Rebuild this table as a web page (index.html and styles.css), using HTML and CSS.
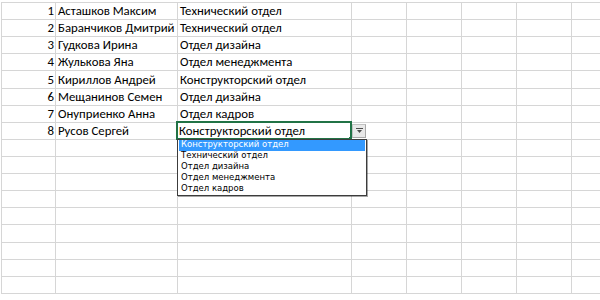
FILE: index.html
```html
<!DOCTYPE html>
<html lang="ru">
<head>
  <meta charset="UTF-8" />
  <title>Отделы</title>
  <link rel="stylesheet" href="styles.css">
</head>
<body>
  <div id="sheet" class="sheet"></div>

  <script>
    const staff = [
      ['Асташков Максим', 'Технический отдел'],
      ['Баранчиков Дмитрий', 'Технический отдел'],
      ['Гудкова Ирина', 'Отдел дизайна'],
      ['Жулькова Яна', 'Отдел менеджмента'],
      ['Кириллов Андрей', 'Конструкторский отдел'],
      ['Мещанинов Семен', 'Отдел дизайна'],
      ['Онуприенко Анна', 'Отдел кадров'],
      ['Русов Сергей', 'Конструкторский отдел']
    ];
    const departments = ['Конструкторский отдел', 'Технический отдел', 'Отдел дизайна', 'Отдел менеджмента', 'Отдел кадров'];
    const totalRows = 17;
    const emptyCols = 5;

    function cell(text, cls) {
      const el = document.createElement('div');
      el.className = 'cell' + (cls ? ' ' + cls : '');
      el.textContent = text || '';
      return el;
    }

    function dropdown() {
      const list = document.createElement('div');
      list.className = 'dropdown';
      departments.forEach((d, i) => {
        const item = document.createElement('div');
        item.className = 'option' + (i === 0 ? ' active' : '');
        item.textContent = d;
        list.appendChild(item);
      });
      return list;
    }

    function buildSheet() {
      const sheet = document.getElementById('sheet');
      for (let r = 0; r < totalRows; r++) {
        const row = staff[r];
        sheet.appendChild(cell(row ? r + 1 : '', 'num'));
        sheet.appendChild(cell(row ? row[0] : ''));
        const dept = cell(row ? row[1] : '');
        if (r === staff.length - 1) {
          dept.classList.add('selected');
          const handle = document.createElement('span');
          handle.className = 'handle';
          const btn = document.createElement('span');
          btn.className = 'drop-btn';
          btn.innerHTML = '<svg width="7" height="5" viewBox="0 0 7 5"><rect x="0" y="0" width="7" height="1" fill="#4d4d4d"/><path d="M1 2h5l-2.5 3z" fill="#4d4d4d"/></svg>';
          dept.append(handle, btn, dropdown());
        }
        sheet.appendChild(dept);
        for (let c = 0; c < emptyCols; c++) sheet.appendChild(cell(''));
      }
    }

    buildSheet();
  </script>
</body>
</html>
```
FILE: styles.css
```css
body {
  margin: 0;
  width: 600px;
  height: 300px;
  overflow: hidden;
  background: #fff;
  color: #000;
  font-family: "Carlito", "Lato", sans-serif;
  font-size: 12.8px;
}

.sheet {
  display: grid;
  grid-template-columns: 54px 122px 174px repeat(5, 55px);
  grid-auto-rows: 17.12px;
  margin: 2px 0 0 1px;
  border-top: 1px solid #d6d6d6;
  border-left: 1px solid #d6d6d6;
}

.cell {
  display: flex;
  align-items: flex-end;
  box-sizing: border-box;
  padding: 0 2px 2px;
  line-height: 13px;
  white-space: nowrap;
  border-right: 1px solid #d6d6d6;
  border-bottom: 1px solid #d6d6d6;
}

.num {
  justify-content: flex-end;
  padding-right: 1px;
}

.selected {
  position: relative;
  padding-left: 1px;
}

.selected::before {
  content: "";
  position: absolute;
  top: -2px;
  left: -2px;
  right: -1px;
  bottom: -1px;
  border: 2px solid #217346;
  pointer-events: none;
}

.handle {
  position: absolute;
  right: -1px;
  bottom: -1px;
  width: 3px;
  height: 3px;
  background: #217346;
}

.drop-btn {
  position: absolute;
  left: calc(100% + 1px);
  top: 1px;
  width: 14px;
  height: 14px;
  box-sizing: border-box;
  display: flex;
  align-items: center;
  justify-content: center;
  background: #e9e9e9;
  border: 1px solid #c2c2c2;
  border-right-color: #a9a9a9;
  border-bottom-color: #a9a9a9;
}

/* список значений проверки данных */
.dropdown {
  position: absolute;
  z-index: 2;
  left: -1px;
  top: 100%;
  width: 190px;
  height: 57px;
  box-sizing: border-box;
  padding: 0 1px;
  background: #fff;
  border: 1px solid #3c3c3c;
  box-shadow: 1px 1px 0 rgba(0, 0, 0, 0.35);
  font-family: "DejaVu Sans", "Liberation Sans", sans-serif;
  font-size: 8.5px;
  line-height: 9px;
}

.option {
  height: 11px;
  padding-left: 2px;
  color: #000;
}

.option.active {
  background: #3399ff;
  color: #fff;
}
```
